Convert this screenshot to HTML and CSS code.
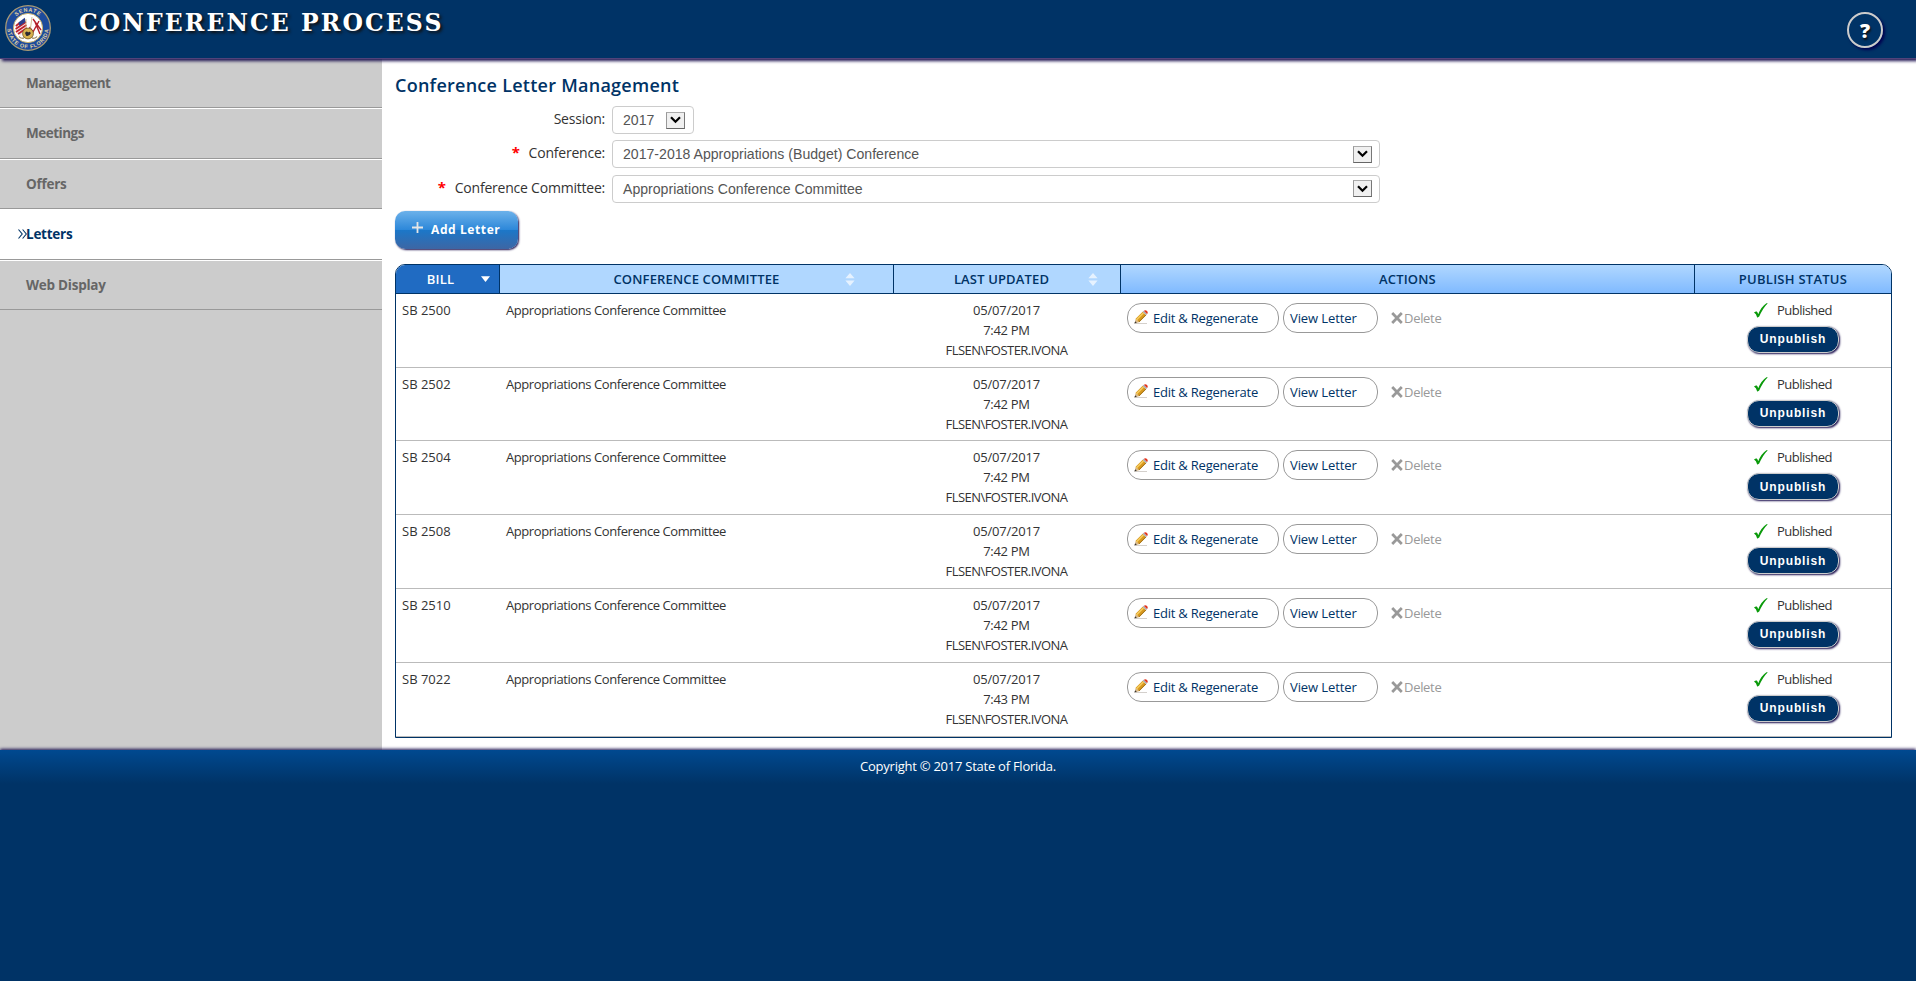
FILE: index.html
```html
<!DOCTYPE html>
<html lang="en">
<head>
<meta charset="utf-8">
<title>Conference Process</title>
<link rel="stylesheet" href="styles.css">
</head>
<body>
<svg class="defs" width="0" height="0" aria-hidden="true">
  <symbol id="pencil" viewBox="0 0 14 14">
    <path d="M2 13.5h11" stroke="#d4d0cc" stroke-width="1"/>
    <path d="M.6 13.4 1.6 8.8 5.1 12.3Z" fill="#d9b98a"/>
    <path d="M.4 13.6 1.1 11.2 2.8 12.9Z" fill="#333"/>
    <path d="M1.6 8.8 8.6 1.8 12.1 5.3 5.1 12.3Z" fill="#d99a20"/>
    <path d="M2.6 9.8 9.6 2.8" stroke="#f7cf62" stroke-width="1.3"/>
    <path d="M4.8 12 11.8 5" stroke="#94650f" stroke-width=".9"/>
    <path d="M8.6 1.8 9.8.8 13.1 4.1 12.1 5.3Z" fill="#a9acb4"/>
    <path d="M9.8.8Q11.5-.4 13 .9 14.4 2.5 13.1 4.1Z" fill="#e5341d"/>
  </symbol>
  <symbol id="cross" viewBox="0 0 12 12">
    <path d="M1.2 1 10.8 11M10.8 1 1.2 11" stroke="#999" stroke-width="2.7" fill="none"/>
  </symbol>
  <symbol id="check" viewBox="0 0 14 15">
    <path d="M0 9.6Q1.6 8.2 2.8 8.6 3.6 9.2 4.2 11.2 7.4 3.6 12.4.3L13.8.2Q8.6 5.4 5.2 13.6 4.4 14.6 3.2 14.4 2.2 10.6 0 9.6Z" fill="#0a9a0a"/>
  </symbol>
  <symbol id="chev" viewBox="0 0 11 8">
    <path d="M1 1.2 5.5 5.8 10 1.2" stroke="#000" stroke-width="2.2" fill="none"/>
  </symbol>
</svg>

<header class="topbar">
  <svg class="seal" viewBox="0 0 46 46">
    <circle cx="23" cy="23" r="22.3" fill="#1d4b9c" stroke="#a99a74" stroke-width="1.3"/>
    <circle cx="23" cy="23" r="14.6" fill="#fff" stroke="#c9b06a" stroke-width="1"/>
    <path id="arcTop" d="M6.6 23a16.4 16.4 0 0 1 32.8 0" fill="none"/>
    <path id="arcBottom" d="M4.6 13.6A20.6 20.6 0 1 0 41.4 13.6" fill="none"/>
    <text class="seal-text"><textPath href="#arcTop" startOffset="50%" text-anchor="middle">SENATE</textPath></text>
    <text class="seal-text"><textPath href="#arcBottom" startOffset="50%" text-anchor="middle">STATE OF FLORIDA</textPath></text>
    <path d="M11 19 20 12.5 22 24 15 31 10.5 27Z" fill="#f3e6e6"/>
    <path d="M10.8 21 16 17M10.6 24 21 17M11 27 21.5 20M13 29 21.8 23" stroke="#c0202c" stroke-width="1.6"/>
    <path d="M13.5 17.6 19.8 12.8 20.6 17 14.6 21Z" fill="#2a3f8e"/>
    <path d="M28 14 36 25M34 16 28 27 24.5 22M30 17 35 29" stroke="#b3202a" stroke-width="1.4" fill="none"/>
    <path d="M21 14v14M27 12 25 27" stroke="#c8b27a" stroke-width=".8"/>
    <circle cx="23" cy="28.5" r="5.4" fill="#d8b24e" stroke="#6f5620" stroke-width=".8"/>
    <path d="M20 28q1.5-3 3.2-.4 1.4-2 2.6.6-1.6 3.6-4.6 2.6Z" fill="#2a2a30"/>
    <path d="M14 31.5q2 2.5 5 1.4M32 31.5q-2 2.5-5 1.4" stroke="#8f7a48" stroke-width="1.2" fill="none"/>
  </svg>
  <h1 class="app-title">CONFERENCE PROCESS</h1>
  <span class="help">?</span>
</header>

<div class="layout">
  <nav class="side">
    <a class="side-item">Management</a>
    <a class="side-item">Meetings</a>
    <a class="side-item loose">Offers</a>
    <a class="side-item loose active"><svg class="marker" viewBox="0 0 9 10"><path d="M.5.5 4.2 5 .5 9.5M4.6.5 8.3 5 4.6 9.5" fill="none" stroke="#036" stroke-width="1.1"/></svg>Letters</a>
    <a class="side-item loose">Web Display</a>
  </nav>
  <main class="content">
    <h2 class="heading">Conference Letter Management</h2>
    <div class="form">
      <label class="label">Session:</label>
      <div class="select short">2017<span class="drop"><svg><use href="#chev"/></svg></span></div>
      <label class="label"><b class="req">*</b>Conference:</label>
      <div class="select">2017-2018 Appropriations (Budget) Conference<span class="drop"><svg><use href="#chev"/></svg></span></div>
      <label class="label"><b class="req">*</b>Conference Committee:</label>
      <div class="select">Appropriations Conference Committee<span class="drop"><svg><use href="#chev"/></svg></span></div>
    </div>
    <button class="add"><svg class="plus" viewBox="0 0 11 11"><path d="M5.5 0v11M0 5.5h11" stroke="#e6e6e6" stroke-width="1.8"/></svg>Add Letter</button>

    <section class="table">
      <div class="row head">
        <div class="th sorted">BILL<svg class="sort down" viewBox="0 0 9 6"><path d="M0 .3h9L4.5 6Z" fill="#fff"/></svg></div>
        <div class="th flat">CONFERENCE COMMITTEE<svg class="sort" viewBox="0 0 10 13"><path d="M5 0 9.6 5.2H.4ZM5 13 .4 7.6h9.2Z" fill="#e6f2ff"/></svg></div>
        <div class="th flat narrow">LAST UPDATED<svg class="sort" viewBox="0 0 10 13"><path d="M5 0 9.6 5.2H.4ZM5 13 .4 7.6h9.2Z" fill="#e6f2ff"/></svg></div>
        <div class="th">ACTIONS</div>
        <div class="th">PUBLISH STATUS</div>
      </div>
      <div class="row body">
        <div class="bill">SB 2500</div><div class="comm">Appropriations Conference Committee</div>
        <div class="updated"><span class="date">05/07/2017</span><span>7:42 PM</span><span class="user">FLSEN\FOSTER.IVONA</span></div>
        <div class="actions"><a class="pill edit"><svg><use href="#pencil"/></svg>Edit &amp; Regenerate</a><a class="pill view">View Letter</a><a class="delete"><svg><use href="#cross"/></svg>Delete</a></div>
        <div class="status"><span class="pub"><svg><use href="#check"/></svg>Published</span><button class="unpub">Unpublish</button></div>
      </div>
      <div class="row body">
        <div class="bill">SB 2502</div><div class="comm">Appropriations Conference Committee</div>
        <div class="updated"><span class="date">05/07/2017</span><span>7:42 PM</span><span class="user">FLSEN\FOSTER.IVONA</span></div>
        <div class="actions"><a class="pill edit"><svg><use href="#pencil"/></svg>Edit &amp; Regenerate</a><a class="pill view">View Letter</a><a class="delete"><svg><use href="#cross"/></svg>Delete</a></div>
        <div class="status"><span class="pub"><svg><use href="#check"/></svg>Published</span><button class="unpub">Unpublish</button></div>
      </div>
      <div class="row body">
        <div class="bill">SB 2504</div><div class="comm">Appropriations Conference Committee</div>
        <div class="updated"><span class="date">05/07/2017</span><span>7:42 PM</span><span class="user">FLSEN\FOSTER.IVONA</span></div>
        <div class="actions"><a class="pill edit"><svg><use href="#pencil"/></svg>Edit &amp; Regenerate</a><a class="pill view">View Letter</a><a class="delete"><svg><use href="#cross"/></svg>Delete</a></div>
        <div class="status"><span class="pub"><svg><use href="#check"/></svg>Published</span><button class="unpub">Unpublish</button></div>
      </div>
      <div class="row body">
        <div class="bill">SB 2508</div><div class="comm">Appropriations Conference Committee</div>
        <div class="updated"><span class="date">05/07/2017</span><span>7:42 PM</span><span class="user">FLSEN\FOSTER.IVONA</span></div>
        <div class="actions"><a class="pill edit"><svg><use href="#pencil"/></svg>Edit &amp; Regenerate</a><a class="pill view">View Letter</a><a class="delete"><svg><use href="#cross"/></svg>Delete</a></div>
        <div class="status"><span class="pub"><svg><use href="#check"/></svg>Published</span><button class="unpub">Unpublish</button></div>
      </div>
      <div class="row body">
        <div class="bill">SB 2510</div><div class="comm">Appropriations Conference Committee</div>
        <div class="updated"><span class="date">05/07/2017</span><span>7:42 PM</span><span class="user">FLSEN\FOSTER.IVONA</span></div>
        <div class="actions"><a class="pill edit"><svg><use href="#pencil"/></svg>Edit &amp; Regenerate</a><a class="pill view">View Letter</a><a class="delete"><svg><use href="#cross"/></svg>Delete</a></div>
        <div class="status"><span class="pub"><svg><use href="#check"/></svg>Published</span><button class="unpub">Unpublish</button></div>
      </div>
      <div class="row body">
        <div class="bill">SB 7022</div><div class="comm">Appropriations Conference Committee</div>
        <div class="updated"><span class="date">05/07/2017</span><span>7:43 PM</span><span class="user">FLSEN\FOSTER.IVONA</span></div>
        <div class="actions"><a class="pill edit"><svg><use href="#pencil"/></svg>Edit &amp; Regenerate</a><a class="pill view">View Letter</a><a class="delete"><svg><use href="#cross"/></svg>Delete</a></div>
        <div class="status"><span class="pub"><svg><use href="#check"/></svg>Published</span><button class="unpub">Unpublish</button></div>
      </div>
    </section>
  </main>
</div>
<footer class="footer">Copyright © 2017 State of Florida.</footer>
</body>
</html>
```
FILE: styles.css
```css
* { box-sizing: border-box; }
html { background: #003366; }
body {
  margin: 0;
  background: #003366;
  font: 13px/20px "Open Sans", sans-serif;
  color: #333;
  white-space: nowrap;
}
.defs { display: block; }

.topbar {
  position: relative;
  display: flex;
  align-items: flex-start;
  height: 59px;
  padding: 5px 33px 0 5px;
  background: #003366;
  border-bottom: 1px solid #50437a;
  box-shadow: 2px 2px 3px #1c104f;
}
.seal { width: 46px; height: 46px; flex: none; }
.seal-text { font: bold 5.4px "Liberation Sans", sans-serif; fill: #e3d6a4; letter-spacing: .7px; }
.app-title {
  flex: 1;
  margin: 3px 0 0 28px;
  font: bold 23.5px/30px "DejaVu Serif", serif;
  letter-spacing: 2.1px;
  color: #fff;
  text-shadow: 2px 2px 3px #111;
}
.help {
  width: 36px;
  height: 36px;
  margin-top: 7px;
  border: 2px solid #ccc;
  border-radius: 50%;
  font: 800 20px/34px "Open Sans", sans-serif;
  text-align: center;
  color: #fff;
  box-shadow: 2px 2px 3px #000050;
  text-shadow: 1px 2px 2px #111;
}

.layout { display: flex; height: 691px; background: #fff; }
.side { width: 382px; flex: none; background: #ccc; }
.side-item {
  display: flex;
  align-items: center;
  height: 50.6px;
  padding-left: 26px;
  border-top: 1px solid #fff;
  border-bottom: 1px solid #999;
  font-size: 13.5px;
  font-weight: 700;
  letter-spacing: -.5px;
  color: #666;
}
.side-item:first-child { height: 49px; border-top: 0; padding-bottom: 1px; }
.side-item.loose { letter-spacing: -.25px; }
.side-item.active { padding-left: 18px; background: #fff; color: #003366; }
.marker { width: 9px; height: 10px; margin-right: -1px; }

.content { flex: 1; padding: 14px 24px 0 13px; }
.heading {
  margin: 0;
  font-size: 18px;
  line-height: 24px;
  font-weight: 600;
  letter-spacing: .26px;
  color: #003366;
}
.form {
  display: grid;
  grid-template-columns: 210px 768px;
  column-gap: 7px;
  row-gap: 6.4px;
  margin-top: 9px;
}
.label { text-align: right; font-size: 14px; line-height: 25px; letter-spacing: -.22px; }
.req { margin-right: 9px; font-size: 15px; line-height: 20px; color: #f00; }
.select {
  display: flex;
  align-items: center;
  justify-content: space-between;
  height: 28px;
  padding: 0 7px 0 10px;
  border: 1px solid #ccc;
  border-radius: 4px;
  background: #fff;
  font: 14.1px/20px "Liberation Sans", sans-serif;
  color: #555;
}
.select.short { width: 82px; padding-right: 8px; }
.drop {
  display: grid;
  place-items: center;
  width: 19px;
  height: 17px;
  background: #f0f0f0;
  border: 1px solid #999;
  border-color: #aaa #777 #666 #999;
}
.drop svg { width: 11px; height: 8px; }

.add {
  display: flex;
  align-items: center;
  width: 123px;
  height: 38px;
  margin-top: 8px;
  padding: 1px 0 0 17px;
  border: 0;
  border-radius: 10px;
  background: linear-gradient(#6cb1ea, #2c87d9 50%, #1c77c8 51%, #3d66a4);
  box-shadow: 1px 1px 2px #1c104f;
  font: 700 12px/20px "Open Sans", sans-serif;
  letter-spacing: .6px;
  color: #fff;
}
.plus { width: 11px; height: 11px; margin: -5px 8px 0 0; }

.table {
  margin-top: 15px;
  border: 1px solid #003366;
  border-radius: 10px 10px 0 0;
  overflow: hidden;
}
.row { display: grid; grid-template-columns: 104px 394px 227px 574px 196px; }
.head { height: 29px; border-bottom: 1px solid #003366; }
.th {
  display: flex;
  align-items: center;
  justify-content: center;
  position: relative;
  border-right: 1px solid #003366;
  background: linear-gradient(#b0d7ff, #80baff);
  font-weight: 600;
  letter-spacing: .15px;
  color: #003366;
}
.th:last-child { border-right: 0; letter-spacing: .25px; }
.th.flat { background: #b0d7ff; }
.th.narrow { padding-right: 11px; }
.th.sorted { background: #206bc2; color: #fff; padding-right: 14px; }
.sort { position: absolute; right: 38px; top: 8px; width: 10px; height: 13px; }
.narrow .sort { right: 22px; }
.sort.down { right: 9px; top: 11px; width: 9px; height: 6px; }

.body { height: 73.8px; border-bottom: 1px solid #bbb; }
.bill { padding: 6px 0 0 6px; }
.comm { padding: 6px 0 0 6px; letter-spacing: -.42px; }
.updated { display: flex; flex-direction: column; align-items: center; padding: 6px 2px 0 0; letter-spacing: -.3px; }
.date { letter-spacing: -.2px; }
.user { letter-spacing: -.54px; }
.actions { display: flex; align-items: flex-start; padding: 9px 0 0 6px; }
.pill {
  display: flex;
  align-items: center;
  height: 30px;
  border: 1px solid #999;
  border-radius: 14px;
  color: #003366;
}
.edit { width: 152px; padding-left: 6px; letter-spacing: -.22px; }
.edit svg { width: 14px; height: 14px; margin: -1px 5px 0 0; flex: none; }
.view { width: 95px; margin-left: 4px; padding-left: 6px; letter-spacing: -.1px; }
.delete { display: flex; align-items: center; height: 30px; margin-left: 13px; letter-spacing: -.3px; color: #999; }
.delete svg { width: 12px; height: 12px; margin-right: 1px; }
.status { display: flex; flex-direction: column; align-items: center; padding-top: 6px; }
.pub { display: flex; align-items: center; letter-spacing: -.55px; }
.pub svg { width: 14px; height: 15px; margin: 1px 9px 0 0; }
.unpub {
  width: 92px;
  height: 27px;
  margin-top: 6px;
  padding: 0;
  border: 1px solid #ccc;
  border-radius: 12px;
  background: #003366;
  box-shadow: 1px 1px 2px #1c104f;
  font: bold 12px/20px "Liberation Sans", sans-serif;
  letter-spacing: .85px;
  color: #fff;
}

.footer {
  position: relative;
  height: 34px;
  padding-top: 6px;
  background: linear-gradient(#004990, #003366);
  box-shadow: 0 -1px 3px #1c104f;
  text-align: center;
  font-weight: 500;
  letter-spacing: -.25px;
  color: #fff;
}
```
